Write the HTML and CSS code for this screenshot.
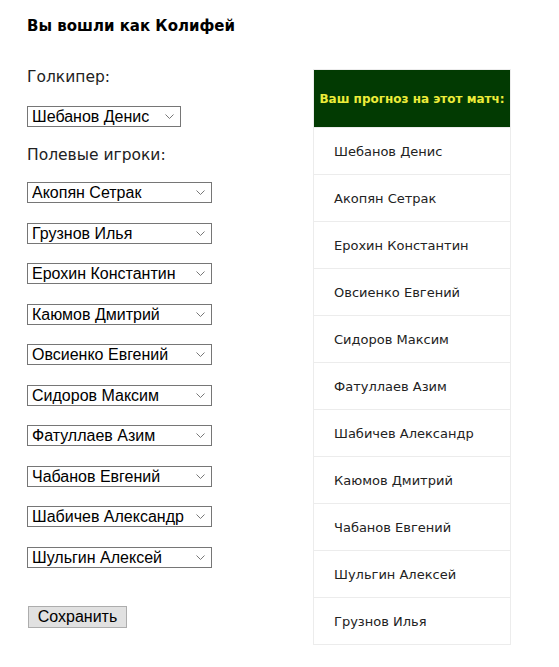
FILE: index.html
```html
<!DOCTYPE html>
<html lang="ru">
<head>
  <meta charset="UTF-8">
  <meta name="viewport" content="width=device-width, initial-scale=1.0">
  <title>Прогноз на матч</title>
  <link rel="stylesheet" href="styles.css">
</head>
<body>
  <div class="page">
    <form class="picker">
      <h3 class="user">Вы вошли как Колифей</h3>

      <p class="caption caption-gk">Голкипер:</p>
      <select class="player player-gk">
        <option>Шебанов Денис</option>
      </select>

      <p class="caption caption-field">Полевые игроки:</p>
      <div class="field-list">
        <select class="player"><option>Акопян Сетрак</option></select>
        <select class="player"><option>Грузнов Илья</option></select>
        <select class="player"><option>Ерохин Константин</option></select>
        <select class="player"><option>Каюмов Дмитрий</option></select>
        <select class="player"><option>Овсиенко Евгений</option></select>
        <select class="player"><option>Сидоров Максим</option></select>
        <select class="player"><option>Фатуллаев Азим</option></select>
        <select class="player"><option>Чабанов Евгений</option></select>
        <select class="player"><option>Шабичев Александр</option></select>
        <select class="player"><option>Шульгин Алексей</option></select>
      </div>

      <button type="button" class="save-btn">Сохранить</button>
    </form>

    <table class="forecast">
      <thead>
        <tr><th>Ваш прогноз на этот матч:</th></tr>
      </thead>
      <tbody>
        <tr><td>Шебанов Денис</td></tr>
        <tr><td>Акопян Сетрак</td></tr>
        <tr><td>Ерохин Константин</td></tr>
        <tr><td>Овсиенко Евгений</td></tr>
        <tr><td>Сидоров Максим</td></tr>
        <tr><td>Фатуллаев Азим</td></tr>
        <tr><td>Шабичев Александр</td></tr>
        <tr><td>Каюмов Дмитрий</td></tr>
        <tr><td>Чабанов Евгений</td></tr>
        <tr><td>Шульгин Алексей</td></tr>
        <tr><td>Грузнов Илья</td></tr>
      </tbody>
    </table>
  </div>
</body>
</html>
```

FILE: styles.css
```css
body {
  margin: 0;
  padding: 0;
  background: #fff;
  color: #111;
  font-family: "DejaVu Sans", sans-serif;
}

.page {
  display: flex;
  align-items: flex-start;
  padding: 16px 0 0 27px;
}

.picker {
  width: 286px;
  display: flex;
  flex-direction: column;
  align-items: flex-start;
}

.user {
  margin: 0;
  font-size: 15px;
  line-height: 20px;
  font-weight: bold;
  color: #000;
}

.caption {
  margin: 0;
  font-size: 15.5px;
  line-height: 20px;
  font-weight: normal;
  color: #222;
}

.caption-gk {
  margin-top: 31px; /* space under the title */
}

.caption-field {
  margin-top: 18px;
}

.player {
  appearance: none;
  -webkit-appearance: none;
  height: 21px;
  width: 185px;
  margin: 0;
  padding: 0 20px 0 4px;
  font-family: "Liberation Sans", Arial, sans-serif;
  font-size: 16px;
  color: #000;
  background: #fff url("data:image/svg+xml;utf8,<svg xmlns='http://www.w3.org/2000/svg' width='9' height='5' viewBox='0 0 9 5'><path d='M0.5 0.5 L4.5 4.5 L8.5 0.5' fill='none' stroke='%23777' stroke-width='1'/></svg>") no-repeat right 6px center;
  border: 1px solid #767676;
  border-radius: 0;
  box-sizing: border-box;
}

.player-gk {
  width: 154px;
  margin-top: 19px;
}

.field-list {
  display: flex;
  flex-direction: column;
  gap: 19.5px;
  margin-top: 17px;
}

.save-btn {
  margin: 38px 0 0 1px;
  width: 99px;
  height: 22px;
  padding: 0;
  font-family: "Liberation Sans", Arial, sans-serif;
  font-size: 16px;
  color: #000;
  background: #e1e1e1;
  border: 1px solid #adadad;
  border-radius: 0;
}

.forecast {
  margin-top: 53px;
  width: 198px;
  border-collapse: collapse;
  border: 1px solid #ececec;
}

.forecast th {
  height: 57px;
  padding: 0;
  background: #023a02;
  color: #ecec3a;
  font-size: 12px;
  font-weight: bold;
  text-align: center;
  white-space: nowrap;
}

.forecast td {
  padding: 15px 0 13px 20px;
  line-height: 18px;
  border-top: 1px solid #ececec;
  font-size: 13px;
  color: #222;
}
```
